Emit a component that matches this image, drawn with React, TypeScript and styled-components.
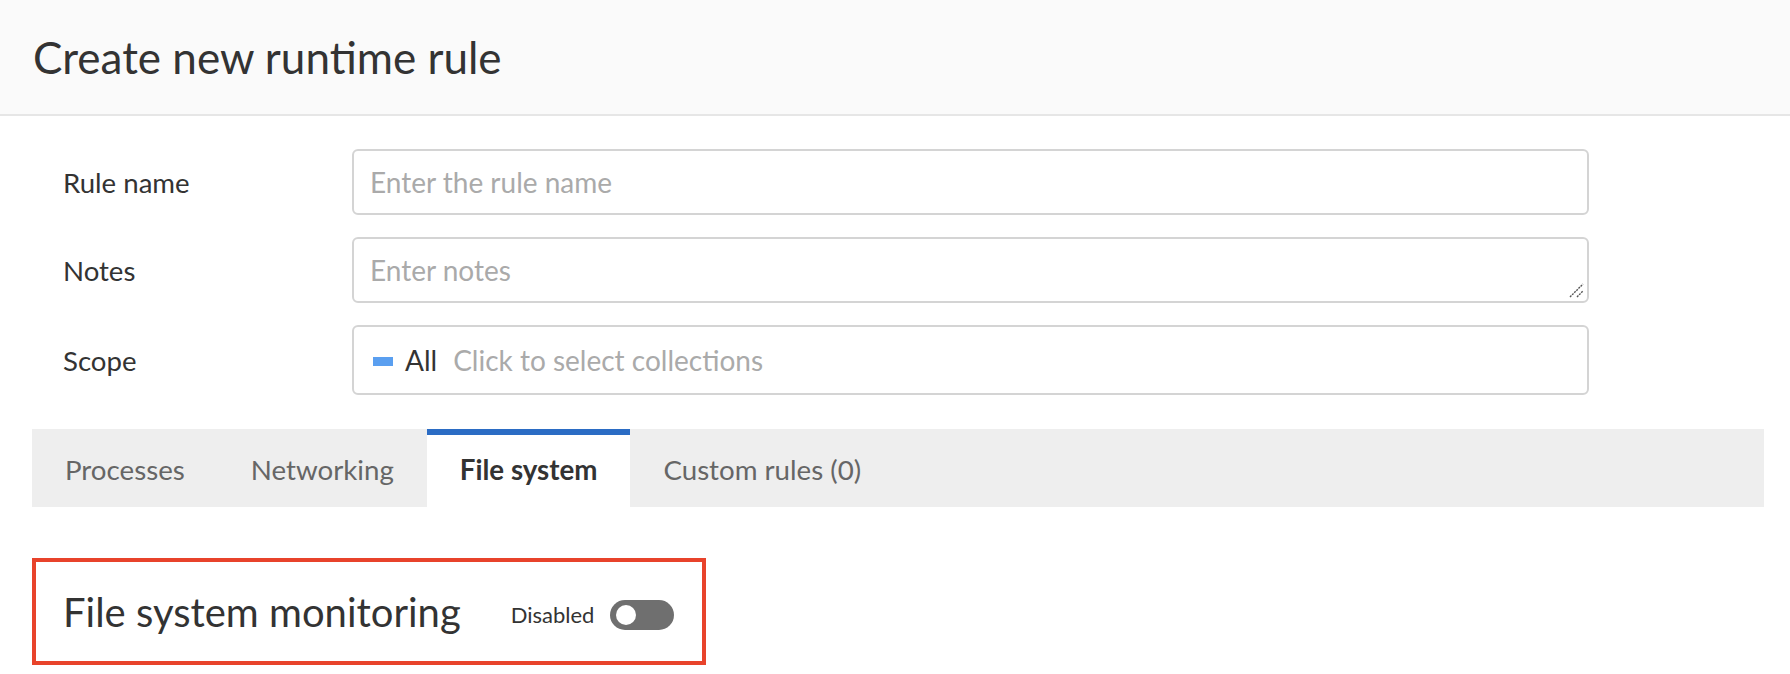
import React from "react";
import styled, { createGlobalStyle } from "styled-components";

const Global = createGlobalStyle`
  html, body { margin: 0; padding: 0; background: #ffffff; }
  body { font-family: Lato, "Open Sans", "Liberation Sans", sans-serif; color: #333333; }
  * { box-sizing: border-box; }
`;

const Page = styled.div`
  width: 1790px;
  min-height: 674px;
  background: #ffffff;
`;

const Header = styled.header`
  height: 116px;
  background: #fafafa;
  border-bottom: 2px solid #e6e6e6;
  display: flex;
  align-items: center;
  padding-left: 33px;
`;

const Title = styled.h1`
  margin: 0;
  font-size: 44px;
  font-weight: 400;
  color: #333333;
  line-height: 1;
`;

const Body = styled.div`
  padding: 33px 26px 0 32px;
`;

const Form = styled.div`
  display: flex;
  flex-direction: column;
  gap: 22px;
  padding-right: 175px;
`;

const Row = styled.div`
  display: grid;
  grid-template-columns: 320px 1fr;
  align-items: center;
`;

const Label = styled.label`
  padding-left: 31px;
  font-size: 27.6px;
  color: #333333;
`;

const Field = styled.div<{ $tall?: boolean }>`
  position: relative;
  height: ${(p) => (p.$tall ? 70 : 66)}px;
  border: 2px solid #d4d4d4;
  border-radius: 6px;
  background: #ffffff;
  display: flex;
  align-items: center;
  padding-left: 16px;
  gap: 12px;
  font-size: 28px;
`;

const Placeholder = styled.span`
  color: #aaaaaa;
`;

const Chip = styled.span`
  display: inline-block;
  width: 20px;
  height: 9px;
  background: #5a9ff0;
  margin-left: 3px;
  margin-top: 2px;
`;

const ChipText = styled.span`
  color: #333333;
  font-size: 28px;
  margin-right: 4px;
`;

const Grip = styled.svg`
  position: absolute;
  right: 3px;
  bottom: 3px;
`;

const Tabs = styled.div`
  margin-top: 34px;
  height: 78px;
  background: #eeeeee;
  display: flex;
`;

const Tab = styled.div<{ $active?: boolean }>`
  padding: 0 33px;
  display: flex;
  align-items: center;
  border-top: 6px solid ${(p) => (p.$active ? "#2b6cc4" : "transparent")};
  background: ${(p) => (p.$active ? "#ffffff" : "transparent")};
  color: ${(p) => (p.$active ? "#333333" : "#666666")};
  font-weight: ${(p) => (p.$active ? 700 : 400)};
  font-size: 27.7px;
  padding-bottom: 4px;
`;

const Highlight = styled.div`
  margin-top: 51px;
  width: 674px;
  height: 107px;
  border: 4px solid #e8432b;
  display: flex;
  align-items: center;
  padding-left: 27px;
`;

const SectionTitle = styled.h2`
  margin: 0;
  font-size: 40px;
  font-weight: 400;
  color: #333333;
  line-height: 1;
`;

const ToggleWrap = styled.div`
  display: flex;
  align-items: center;
  gap: 16px;
  margin-left: 50px;
  margin-top: 6px;
`;

const ToggleLabel = styled.span`
  font-size: 22px;
  color: #333333;
`;

const Switch = styled.div`
  width: 64px;
  height: 30px;
  border-radius: 15px;
  background: #6f6f6f;
  display: flex;
  align-items: center;
  padding-left: 6px;
`;

const Knob = styled.div`
  width: 20px;
  height: 20px;
  border-radius: 50%;
  background: #ffffff;
`;

export default function App() {
  return (
    <Page>
      <Global />
      <Header>
        <Title>Create new runtime rule</Title>
      </Header>
      <Body>
        <Form>
          <Row>
            <Label>Rule name</Label>
            <Field>
              <Placeholder>Enter the rule name</Placeholder>
            </Field>
          </Row>
          <Row>
            <Label>Notes</Label>
            <Field>
              <Placeholder>Enter notes</Placeholder>
              <Grip width="16" height="16" viewBox="0 0 16 16">
                <path d="M2 15 L15 2 M9 15 L15 9" stroke="#555" strokeWidth="1.4" strokeDasharray="2 1" fill="none" />
              </Grip>
            </Field>
          </Row>
          <Row>
            <Label>Scope</Label>
            <Field $tall>
              <Chip />
              <ChipText>All</ChipText>
              <Placeholder>Click to select collections</Placeholder>
            </Field>
          </Row>
        </Form>
        <Tabs>
          <Tab>Processes</Tab>
          <Tab>Networking</Tab>
          <Tab $active>File system</Tab>
          <Tab>Custom rules (0)</Tab>
        </Tabs>
        <Highlight>
          <SectionTitle>File system monitoring</SectionTitle>
          <ToggleWrap>
            <ToggleLabel>Disabled</ToggleLabel>
            <Switch>
              <Knob />
            </Switch>
          </ToggleWrap>
        </Highlight>
      </Body>
    </Page>
  );
}
